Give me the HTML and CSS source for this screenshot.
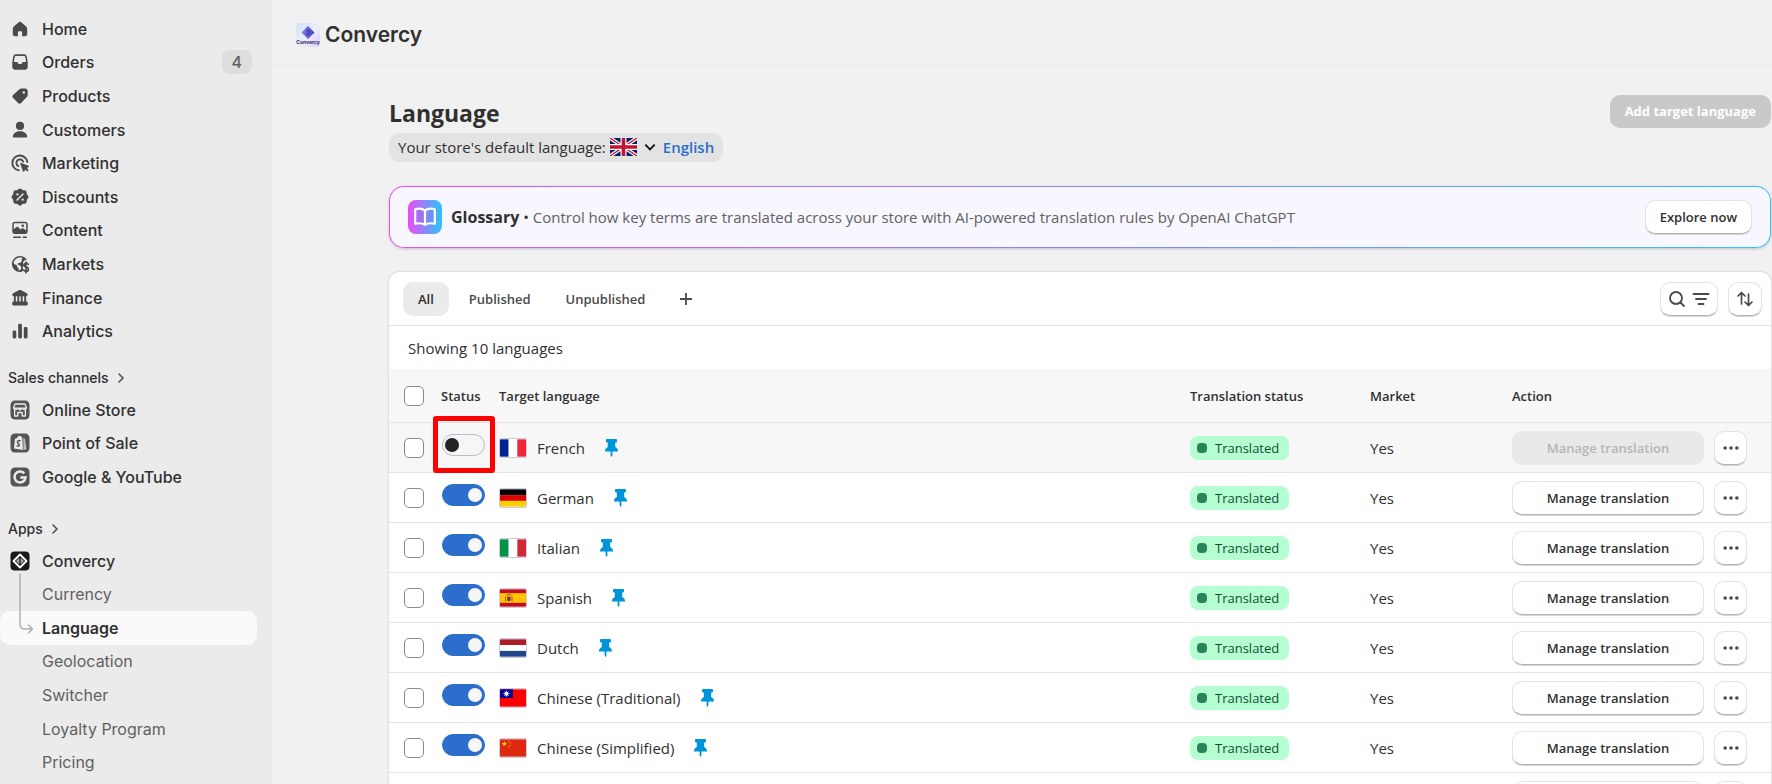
FILE: index.html
```html
<!DOCTYPE html>
<html lang="en">
<head>
    <meta charset="UTF-8">
    <title>Convercy - Language</title>
    <link rel="stylesheet" href="styles.css">
</head>
<body>
    <!-- shared icons -->
    <svg class="sprite" aria-hidden="true">
        <symbol id="pin" viewBox="0 0 13 18">
            <path d="M2 0h9a1 1 0 0 1 1 1v1.500a1 1 0 0 1-1 1h-.8v4.500c1.700.9 2.800 2.200 2.800 4v.5H7.400v4L6.500 18l-.9-1.500v-4H0V12c0-1.800 1.100-3.100 2.800-4V3.500H2a1 1 0 0 1-1-1V1a1 1 0 0 1 1-1z" fill="#0095da"/>
        </symbol>
        <symbol id="dots" viewBox="0 0 20 20">
            <g fill="#4a4a4a"><circle cx="3.500" cy="10" r="2"/><circle cx="10" cy="10" r="2"/><circle cx="16.500" cy="10" r="2"/></g>
        </symbol>
        <symbol id="chevron" viewBox="0 0 12 12">
            <path d="M4 2l4 4-4 4" fill="none" stroke="#4a4a4a" stroke-width="1.500" stroke-linecap="round" stroke-linejoin="round"/>
        </symbol>
    </svg>

    <div class="app">
        <nav class="sidebar">
            <ul class="nav nav-main">
                <li><a href="#"><svg class="icon" viewBox="0 0 20 20"><path d="M9.100 2.900 4 7.300C3.200 8 2.800 8.900 2.800 9.900v5.300a2 2 0 0 0 2 2h3.100v-4a1 1 0 0 1 1-1h2.200a1 1 0 0 1 1 1v4h3.100a2 2 0 0 0 2-2V9.900c0-1-.4-1.900-1.200-2.600l-5.100-4.400a1.400 1.400 0 0 0-1.800 0z"/></svg>Home</a></li>
                <li><a href="#"><svg class="icon" viewBox="0 0 20 20"><path fill-rule="evenodd" d="M5.800 2.300h8.400c1.300 0 2.400 1 2.600 2.300l.9 5.400v4.700a3 3 0 0 1-3 3H5.300a3 3 0 0 1-3-3V10l.9-5.400C3.400 3.300 4.500 2.300 5.800 2.300zM6 3.900c-.7 0-1.200.4-1.300 1.100L3.900 10h2.600c.8 0 1.200.5 1.600 1.200.3.6.8.9 1.900.9s1.600-.3 1.900-.9c.4-.7.8-1.200 1.600-1.200h2.600l-.8-5c-.1-.7-.6-1.100-1.300-1.100z"/></svg>Orders<span class="count">4</span></a></li>
                <li><a href="#"><svg class="icon" viewBox="0 0 20 20"><path fill-rule="evenodd" d="M11.200 2.500h3.800a2.700 2.700 0 0 1 2.700 2.700v3.600c0 .8-.3 1.600-.9 2.200l-5.700 5.900a2.100 2.100 0 0 1-3 0l-5-5a2.100 2.100 0 0 1 0-3l6-5.500c.6-.6 1.300-.9 2.100-.9zM13.800 5.300a1.200 1.200 0 1 0 0 2.400 1.200 1.200 0 0 0 0-2.400z"/></svg>Products</a></li>
                <li><a href="#"><svg class="icon" viewBox="0 0 20 20"><circle cx="10" cy="5.900" r="4.100"/><path d="M2.800 16.200c.5-3 3.400-5 7.200-5s6.700 2 7.200 5c.1.800-.5 1.400-1.300 1.400H4.100c-.8 0-1.400-.6-1.300-1.400z"/></svg>Customers</a></li>
                <li><a href="#"><svg class="icon" viewBox="0 0 20 20"><g fill="none" stroke="#4a4a4a" stroke-width="1.900" stroke-linecap="round"><path d="M8.800 17.400A7.500 7.500 0 1 1 17.300 9"/><path d="M8.300 13A3.500 3.500 0 1 1 13.200 8.700"/></g><path d="M10.300 9.800l8.300 3c.6.200.6 1 .1 1.300l-2 .9 2 2-1.500 1.500-2-2-.9 2c-.3.500-1.100.5-1.300-.1l-3-8.300c-.1-.2.100-.4.300-.3z"/></svg>Marketing</a></li>
                <li><a href="#"><svg class="icon" viewBox="0 0 20 20"><rect x="3.300" y="3.300" width="13.400" height="13.400" rx="2.500"/><rect x="3.300" y="3.300" width="13.400" height="13.400" rx="2.500" transform="rotate(45 10 10)"/><path d="M7 13l6-6" stroke="#ebebeb" stroke-width="1.500" stroke-linecap="round"/><g fill="#ebebeb"><circle cx="7.400" cy="7.400" r="1.100"/><circle cx="12.700" cy="12.700" r="1.100"/></g></svg>Discounts</a></li>
                <li><a href="#"><svg class="icon" viewBox="0 0 20 20"><path fill-rule="evenodd" d="M5 1.800h10a2.700 2.700 0 0 1 2.700 2.700v6.700a2.700 2.700 0 0 1-2.700 2.700H5a2.700 2.700 0 0 1-2.700-2.700V4.500A2.700 2.700 0 0 1 5 1.800zm0 1.500c-.7 0-1.200.5-1.200 1.200v4.800l2.700-2.200c.5-.4 1-.4 1.500 0L10.500 9.500l1.400-1c.5-.4 1-.4 1.500 0l2.800 2V4.500c0-.7-.5-1.200-1.200-1.200zm7.800 1.200a1.300 1.300 0 1 0 0 2.600 1.300 1.300 0 0 0 0-2.600z"/><path d="M3.800 17.200h6.500M13.300 17.200h3" stroke="#4a4a4a" stroke-width="1.600" stroke-linecap="round"/></svg>Content</a></li>
                <li><a href="#"><svg class="icon" viewBox="0 0 20 20"><path fill-rule="evenodd" d="M10 1.900c2.900 0 5.400 1.500 6.900 3.800-1.900-.2-3.200.8-3.700 2.300-.4 1.300 0 2.500.9 3.400-1.300.8-1.700 2.200-1 3.600.3.700.1 1.300-.6 1.900-.8.900-1.600 1.200-2.500 1.200a8.100 8.100 0 1 1 0-16.200zM3.600 8.800c.1 1 1 1.700 2.200 1.900 1 .2 1.300.7 1.300 1.500 0 1 .5 1.500 1.400 1.700l.3 2.600c1.700-.4 2.500-1.600 2.400-3.100-.1-1.500-1.200-2-2.500-2.400-.9-.3-1.200-.8-.8-1.400.4-.7 1.300-.7 2.200-.9 1.400-.4 1.900-1.300 1.600-2.500-.3-1.100.1-1.800 1-2.300-3.700-1.500-8.200.4-9.100 4.900z"/><path d="M18.300 10.300c-.5-.8-1.300-1.100-2.200-1-2.600.2-2.600 3.400 0 3.800 3.100.5 3 4.200 0 4.200-1.100 0-1.900-.4-2.400-1.300M16 8v11" fill="none" stroke="#4a4a4a" stroke-width="1.600" stroke-linecap="round"/></svg>Markets</a></li>
                <li><a href="#"><svg class="icon" viewBox="0 0 20 20"><path d="M9.200 2.100 3.100 5.200c-1.200.6-1 3 .6 3h12.600c1.600 0 1.800-2.400.6-3l-6.100-3.100c-.5-.3-1.100-.3-1.600 0z"/><path d="M4.800 8v6M8.300 8v6M11.700 8v6M15.200 8v6" stroke="#4a4a4a" stroke-width="1.900"/><rect x="2.200" y="13.400" width="15.600" height="4" rx="1.300"/></svg>Finance</a></li>
                <li><a href="#"><svg class="icon" viewBox="0 0 20 20"><rect x="2.600" y="9.500" width="3.700" height="8" rx="1.400"/><rect x="8.200" y="2.800" width="3.700" height="14.700" rx="1.400"/><rect x="13.800" y="6" width="3.700" height="11.500" rx="1.400"/></svg>Analytics</a></li>
            </ul>

            <h2 class="nav-title"><a href="#">Sales channels <svg class="chevron"><use href="#chevron"/></svg></a></h2>
            <ul class="nav nav-channels">
                <li><a href="#"><svg class="icon" viewBox="0 0 20 20"><rect x=".5" y=".5" width="19" height="19" rx="4.500" fill="#555"/><path d="M5 4h10l1.500 4.200H3.500zM4.600 9v7h3.200v-3.500h4.400V16h3.200V9" fill="none" stroke="#ebebeb" stroke-width="1.300" stroke-linejoin="round"/><path d="M3.500 8.200a2 2 0 0 0 4.300 0 2.200 2.200 0 0 0 4.400 0 2 2 0 0 0 4.300 0z" fill="#ebebeb"/></svg>Online Store</a></li>
                <li><a href="#"><svg class="icon" viewBox="0 0 20 20"><rect x=".5" y=".5" width="19" height="19" rx="4.500" fill="#555"/><path d="M5 5.700l2.300-.7C7.700 3.500 8.700 2.700 9.800 2.800c.8.100 1.300.8 1.500 1.500l.9-.2.700 12.900-9-1.500z" fill="#ebebeb"/><path d="M13.200 5l1.700.6 1.500 10.600-2.900.8z" fill="#bbb"/><path d="M10.600 8c-1.700-.9-3.300-.2-3.200 1.300.1 1.300 2.100 1.500 1.900 2.900-.1 1.200-1.700 1.200-2.800.3" fill="none" stroke="#555" stroke-width="1.500"/></svg>Point of Sale</a></li>
                <li><a href="#"><svg class="icon" viewBox="0 0 20 20"><rect x=".5" y=".5" width="19" height="19" rx="4.500" fill="#555"/><path d="M14.200 6.400A5.500 5.500 0 1 0 15.500 10.600H10.300" fill="none" stroke="#ebebeb" stroke-width="2.500"/></svg>Google &amp; YouTube</a></li>
            </ul>

            <h2 class="nav-title"><a href="#">Apps <svg class="chevron"><use href="#chevron"/></svg></a></h2>
            <ul class="nav nav-apps">
                <li><a href="#"><svg class="icon" viewBox="0 0 20 20"><rect x=".5" y=".5" width="19" height="19" rx="4" fill="#1a1a1a"/><path d="M10 3.500l6.500 6.500-6.500 6.500L3.500 10z" fill="none" stroke="#fff" stroke-width="1.800" stroke-linejoin="round"/><path d="M9.300 6.800v6.500L6 10zM10.700 6.800v6.500L14 10z" fill="#aaa"/></svg>Convercy</a></li>
                <li class="sub"><a href="#">Currency</a></li>
                <li class="sub active"><a href="#">Language</a>
                    <svg class="branch" viewBox="0 0 16 64"><path d="M2 1v50q0 5 5 5h7M10.500 52l4 4-4 4" fill="none" stroke="#b0b0b0" stroke-width="1.500" stroke-linecap="round" stroke-linejoin="round"/></svg>
                </li>
                <li class="sub"><a href="#">Geolocation</a></li>
                <li class="sub"><a href="#">Switcher</a></li>
                <li class="sub"><a href="#">Loyalty Program</a></li>
                <li class="sub"><a href="#">Pricing</a></li>
            </ul>
        </nav>

        <main class="main">
            <header class="app-bar">
                <svg class="app-logo" viewBox="0 0 24 24">
                    <defs>
                        <linearGradient id="logo-bg" x1="0" y1="0" x2="1" y2="1"><stop offset="0" stop-color="#c9e0fb"/><stop offset=".5" stop-color="#f0effa"/><stop offset="1" stop-color="#dccbfa"/></linearGradient>
                        <linearGradient id="logo-fg" x1="0" y1="0" x2="1" y2="0"><stop offset="0" stop-color="#8a7bf0"/><stop offset="1" stop-color="#3a48c8"/></linearGradient>
                    </defs>
                    <rect width="24" height="24" rx="4" fill="url(#logo-bg)"/>
                    <path d="M12 3l6.500 6.500L12 16 5.500 9.500z" fill="url(#logo-fg)"/>
                    <path d="M13.800 7.800c-2-1.200-3.500.8-1.800 1.700s.2 2.900-1.800 1.700" fill="none" stroke="#2a2a60"/>
                    <text x="12" y="21" text-anchor="middle" class="logo-text">Convercy</text>
                </svg>
                <span class="app-name">Convercy</span>
            </header>

            <div class="page">
                <div class="page-head">
                    <div>
                        <h1>Language</h1>
                        <div class="default-language">
                            <span>Your store's default language:</span>
                            <button class="flag-picker" aria-label="Change default language">
                                <svg class="uk" viewBox="0 0 27 18"><rect width="27" height="18" fill="#012169"/><path d="M0 0l27 18M27 0L0 18" stroke="#fff" stroke-width="3.600"/><path d="M0 0l27 18M27 0L0 18" stroke="#c8102e" stroke-width="1.300"/><path d="M13.500 0v18M0 9h27" stroke="#fff" stroke-width="6"/><path d="M13.500 0v18M0 9h27" stroke="#c8102e" stroke-width="3.600"/></svg>
                                <svg class="caret" viewBox="0 0 12 12"><path d="M2 4l4 4 4-4" fill="none" stroke="#111" stroke-width="1.600"/></svg>
                            </button>
                            <a href="#">English</a>
                        </div>
                    </div>
                    <button class="btn-primary" disabled>Add target language</button>
                </div>

                <section class="banner">
                    <span class="banner-icon">
                        <svg viewBox="0 0 24 24"><path d="M12 5.500C9.500 3.600 5.500 3.300 2.200 4.200v14.600c3.300-.8 7.300-.6 9.800 1 2.500-1.600 6.500-1.800 9.800-1V4.200C18.500 3.300 14.500 3.600 12 5.500zM12 5.500v14" fill="rgba(120,80,220,.15)" stroke="#fff" stroke-width="2.200" stroke-linejoin="round"/></svg>
                    </span>
                    <p><strong>Glossary</strong> • <span>Control how key terms are translated across your store with AI-powered translation rules by OpenAI ChatGPT</span></p>
                    <button class="btn">Explore now</button>
                </section>

                <section class="card">
                    <div class="tabs">
                        <button class="tab selected">All</button>
                        <button class="tab">Published</button>
                        <button class="tab">Unpublished</button>
                        <button class="tab-add" aria-label="Add view"><svg viewBox="0 0 14 14"><path d="M7 1v12M1 7h12" stroke="#4a4a4a" stroke-width="1.800"/></svg></button>
                        <div class="tools">
                            <button class="btn" aria-label="Search and filter">
                                <svg viewBox="0 0 18 18"><g fill="none" stroke="#4a4a4a" stroke-width="1.800" stroke-linecap="round"><circle cx="8" cy="8" r="6"/><path d="M12.500 12.500L16 16"/></g></svg>
                                <svg viewBox="0 0 18 18"><path d="M1.500 4h15M4 9h10M6.500 14h5" stroke="#4a4a4a" stroke-width="1.800" stroke-linecap="round"/></svg>
                            </button>
                            <button class="btn" aria-label="Sort">
                                <svg viewBox="0 0 18 18"><path d="M5.500 14V2.500M2 6l3.500-3.500L9 6M12.500 4v11.500M9 12l3.500 3.500L16 12" fill="none" stroke="#4a4a4a" stroke-width="1.700" stroke-linecap="round" stroke-linejoin="round"/></svg>
                            </button>
                        </div>
                    </div>
                    <p class="showing">Showing 10 languages</p>

                    <table class="languages">
                        <thead>
                            <tr>
                                <th class="col-check"><input type="checkbox" class="check" aria-label="Select all"></th>
                                <th class="col-status">Status</th>
                                <th>Target language</th>
                                <th class="col-translation">Translation status</th>
                                <th class="col-market">Market</th>
                                <th class="col-action">Action</th>
                            </tr>
                        </thead>
                        <tbody>
                            <tr class="hovered">
                                <td><input type="checkbox" class="check" aria-label="Select French"></td>
                                <td class="highlighted"><input type="checkbox" class="toggle" aria-label="Publish French"></td>
                                <td><div class="lang"><svg class="flag" viewBox="0 0 27 18"><rect width="9" height="18" fill="#002395"/><rect x="9" width="9" height="18" fill="#fff"/><rect x="18" width="9" height="18" fill="#ed2939"/></svg><span>French</span><svg class="pin"><use href="#pin"/></svg></div></td>
                                <td><span class="badge">Translated</span></td>
                                <td>Yes</td>
                                <td><div class="actions"><button class="btn" disabled>Manage translation</button><button class="btn more" aria-label="More"><svg><use href="#dots"/></svg></button></div></td>
                            </tr>
                            <tr>
                                <td><input type="checkbox" class="check" aria-label="Select German"></td>
                                <td><input type="checkbox" class="toggle" aria-label="Publish German" checked></td>
                                <td><div class="lang"><svg class="flag" viewBox="0 0 27 18"><rect width="27" height="6"/><rect y="6" width="27" height="6" fill="#d00"/><rect y="12" width="27" height="6" fill="#ffce00"/></svg><span>German</span><svg class="pin"><use href="#pin"/></svg></div></td>
                                <td><span class="badge">Translated</span></td>
                                <td>Yes</td>
                                <td><div class="actions"><button class="btn">Manage translation</button><button class="btn more" aria-label="More"><svg><use href="#dots"/></svg></button></div></td>
                            </tr>
                            <tr>
                                <td><input type="checkbox" class="check" aria-label="Select Italian"></td>
                                <td><input type="checkbox" class="toggle" aria-label="Publish Italian" checked></td>
                                <td><div class="lang"><svg class="flag" viewBox="0 0 27 18"><rect width="9" height="18" fill="#009246"/><rect x="9" width="9" height="18" fill="#fff"/><rect x="18" width="9" height="18" fill="#ce2b37"/></svg><span>Italian</span><svg class="pin"><use href="#pin"/></svg></div></td>
                                <td><span class="badge">Translated</span></td>
                                <td>Yes</td>
                                <td><div class="actions"><button class="btn">Manage translation</button><button class="btn more" aria-label="More"><svg><use href="#dots"/></svg></button></div></td>
                            </tr>
                            <tr>
                                <td><input type="checkbox" class="check" aria-label="Select Spanish"></td>
                                <td><input type="checkbox" class="toggle" aria-label="Publish Spanish" checked></td>
                                <td><div class="lang"><svg class="flag" viewBox="0 0 27 18"><rect width="27" height="18" fill="#c60b1e"/><rect y="4" width="27" height="10" fill="#ffc400"/><path d="M6.500 6.500c1.500-1.500 4-1.500 5.500 0M5.800 7.500v5M12.500 7.500v5" fill="none" stroke="#8a5a20"/><rect x="7.500" y="7.500" width="3.500" height="4.500" rx="1" fill="#7a3040"/></svg><span>Spanish</span><svg class="pin"><use href="#pin"/></svg></div></td>
                                <td><span class="badge">Translated</span></td>
                                <td>Yes</td>
                                <td><div class="actions"><button class="btn">Manage translation</button><button class="btn more" aria-label="More"><svg><use href="#dots"/></svg></button></div></td>
                            </tr>
                            <tr>
                                <td><input type="checkbox" class="check" aria-label="Select Dutch"></td>
                                <td><input type="checkbox" class="toggle" aria-label="Publish Dutch" checked></td>
                                <td><div class="lang"><svg class="flag" viewBox="0 0 27 18"><rect width="27" height="6" fill="#ae1c28"/><rect y="6" width="27" height="6" fill="#fff"/><rect y="12" width="27" height="6" fill="#21468b"/></svg><span>Dutch</span><svg class="pin"><use href="#pin"/></svg></div></td>
                                <td><span class="badge">Translated</span></td>
                                <td>Yes</td>
                                <td><div class="actions"><button class="btn">Manage translation</button><button class="btn more" aria-label="More"><svg><use href="#dots"/></svg></button></div></td>
                            </tr>
                            <tr>
                                <td><input type="checkbox" class="check" aria-label="Select Chinese (Traditional)"></td>
                                <td><input type="checkbox" class="toggle" aria-label="Publish Chinese (Traditional)" checked></td>
                                <td><div class="lang"><svg class="flag" viewBox="0 0 27 18"><rect width="27" height="18" fill="#fe0000"/><rect width="13.500" height="9" fill="#000095"/><circle cx="6.700" cy="4.500" r="2" fill="#fff"/><path d="M6.700 1.300v6.400M3.500 4.500h6.400M4.500 2.300l4.400 4.400M8.900 2.300L4.500 6.700" stroke="#fff" stroke-width=".8"/></svg><span>Chinese (Traditional)</span><svg class="pin"><use href="#pin"/></svg></div></td>
                                <td><span class="badge">Translated</span></td>
                                <td>Yes</td>
                                <td><div class="actions"><button class="btn">Manage translation</button><button class="btn more" aria-label="More"><svg><use href="#dots"/></svg></button></div></td>
                            </tr>
                            <tr>
                                <td><input type="checkbox" class="check" aria-label="Select Chinese (Simplified)"></td>
                                <td><input type="checkbox" class="toggle" aria-label="Publish Chinese (Simplified)" checked></td>
                                <td><div class="lang"><svg class="flag" viewBox="0 0 27 18"><rect width="27" height="18" fill="#de2910"/><g fill="#ffde00"><path d="M4.500 1.700l.7 2h2.100L5.600 5l.6 2-1.700-1.200L2.800 7l.6-2-1.700-1.300h2.100z"/><circle cx="9" cy="2" r=".6"/><circle cx="10.800" cy="3.800" r=".6"/><circle cx="10.800" cy="6.200" r=".6"/><circle cx="9" cy="8" r=".6"/></g></svg><span>Chinese (Simplified)</span><svg class="pin"><use href="#pin"/></svg></div></td>
                                <td><span class="badge">Translated</span></td>
                                <td>Yes</td>
                                <td><div class="actions"><button class="btn">Manage translation</button><button class="btn more" aria-label="More"><svg><use href="#dots"/></svg></button></div></td>
                            </tr>
                            <tr>
                                <td colspan="5"></td>
                                <td><div class="actions"><button class="btn" aria-label="Manage translation"></button><button class="btn more" aria-label="More"></button></div></td>
                            </tr>
                        </tbody>
                    </table>
                </section>
            </div>
        </main>
    </div>
</body>
</html>
```
FILE: styles.css
```css
*, *::before, *::after {
    box-sizing: border-box;
}
body {
    margin: 0;
    font-family: "Open Sans", "Noto Sans", sans-serif;
    font-size: 15px;
    line-height: 24px;
    color: #303030;
    background-color: #f1f1f1;
}
h1, h2, p, ul {
    margin: 0;
    padding: 0;
}
a {
    color: inherit;
    text-decoration: none;
}
button {
    font: inherit;
    color: inherit;
    border: 0;
    padding: 0;
    background: none;
}
svg {
    display: block;
    flex-shrink: 0;
}
.sprite {
    display: none;
}
.app {
    display: flex;
    height: 100vh;
    overflow: hidden;
}

/* sidebar */
.sidebar {
    flex: 0 0 272px;
    padding-top: 12px;
    background-color: #ebebeb;
    font-family: Inter, sans-serif;
    font-size: 16px;
    font-weight: 500;
}
.nav {
    list-style: none;
    display: grid;
    grid-auto-rows: 1fr;
    margin-right: 15px;
}
.nav-main {
    min-height: 336px;
}
.nav-channels {
    min-height: 101px;
}
.nav-apps {
    min-height: 235px;
}
.nav li {
    display: flex;
    position: relative;
}
.nav a {
    flex: 1;
    display: flex;
    align-items: center;
    gap: 12px;
    padding-left: 10px;
}
.nav .sub a {
    padding-left: 42px;
    font-weight: 400;
    color: #616161;
}
.nav .active a {
    background-color: #fafafa;
    border-radius: 10px;
    font-weight: 600;
    color: #303030;
}
.branch {
    position: absolute;
    left: 18px;
    bottom: 8px;
    width: 16px;
    height: 64px;
}
.icon {
    width: 20px;
    height: 20px;
    fill: #4a4a4a;
}
.count {
    margin-left: auto;
    margin-right: 5px;
    padding: 0 10px;
    border-radius: 8px;
    background-color: #dedede;
    color: #616161;
}
.nav-title {
    margin-top: 14px;
    padding: 4px 8px 3px;
    font-size: 14px;
    font-weight: 500;
}
.nav-channels + .nav-title {
    margin-top: 19px;
}
.nav-title a {
    display: flex;
    align-items: center;
    gap: 6px;
}
.chevron {
    width: 12px;
    height: 12px;
}

/* top bar */
.main {
    flex: 1;
    min-width: 0;
}
.app-bar {
    display: flex;
    align-items: center;
    gap: 5px;
    height: 66px;
    padding: 4px 24px 0;
    border-bottom: 1px solid #e8e8e8;
    font-family: Inter, sans-serif;
}
.app-logo {
    width: 24px;
    height: 24px;
}
.logo-text {
    font-size: 5px;
    font-weight: 700;
    fill: #2a2a60;
}
.app-name {
    font-size: 21px;
    font-weight: 600;
}

/* page */
.page {
    padding: 31px 1px 0 117px;
}
.page-head {
    display: flex;
    justify-content: space-between;
    align-items: flex-start;
}
h1 {
    font-size: 23px;
    font-weight: 700;
    line-height: 32px;
}
.default-language {
    display: flex;
    align-items: center;
    gap: 4px;
    margin-top: 4px;
    padding: 2px 9px 3px;
    border-radius: 10px;
    background-color: #e3e3e3;
}
.default-language a {
    margin-left: 2px;
    font-weight: 600;
    color: #2c6ecb;
}
.flag-picker {
    display: flex;
    align-items: center;
    gap: 6px;
}
.uk {
    width: 27px;
    height: 18px;
}
.caret {
    width: 14px;
    height: 14px;
}
.btn-primary {
    padding: 0 15px;
    border-radius: 10px;
    background-color: #c9c9c9;
    color: #fff;
    font-size: 13px;
    font-weight: 700;
    line-height: 33px;
    margin-top: -2px;
}
.btn {
    display: flex;
    align-items: center;
    justify-content: center;
    gap: 8px;
    height: 34px;
    padding: 0 14px;
    border: 1px solid #e3e3e3;
    border-bottom-color: #b5b5b5;
    border-radius: 10px;
    background-color: #fff;
    box-shadow: 0 1px 0 #d4d4d4;
    font-size: 13px;
    font-weight: 600;
    white-space: nowrap;
}
.btn:disabled {
    border-color: #e9e9e9;
    background-color: #e9e9e9;
    box-shadow: none;
    color: #b5b5b5;
}
.banner {
    display: flex;
    align-items: center;
    gap: 9px;
    margin-top: 24px;
    padding: 13px 18px;
    border: 1px solid transparent;
    border-radius: 15px;
    background: linear-gradient(#f8f7ff, #f8f7ff) padding-box, linear-gradient(90deg, #ec4ef5, #2cc4fc) border-box;
    box-shadow: 0 1px 3px rgba(0, 0, 0, 0.2);
}
.banner-icon {
    padding: 5px;
    border-radius: 8px;
    background: linear-gradient(90deg, #e94df5, #2cc4fc);
}
.banner-icon svg {
    width: 24px;
    height: 24px;
}
.banner p {
    flex: 1;
}
.banner p span {
    color: #616161;
}
.banner strong {
    font-size: 16px;
}

/* language list */
.card {
    margin-top: 24px;
    border-radius: 10px 10px 0 0;
    background-color: #fff;
    box-shadow: 0 0 2px rgba(0, 0, 0, 0.25);
}
.tabs {
    display: flex;
    align-items: center;
    gap: 5px;
    padding: 10px 9px 9px 14px;
    border-bottom: 1px solid #e3e3e3;
}
.tab {
    padding: 0 15px;
    border-radius: 10px;
    font-size: 13px;
    font-weight: 600;
    line-height: 34px;
    color: #4a4a4a;
}
.tab.selected {
    background-color: #ebebeb;
    color: #303030;
}
.tab-add {
    padding: 10px 14px;
}
.tab-add svg {
    width: 14px;
    height: 14px;
}
.tools {
    display: flex;
    gap: 10px;
    margin-left: auto;
}
.tools .btn {
    padding: 0 7px;
    gap: 6px;
}
.tools svg {
    width: 18px;
    height: 18px;
}
.showing {
    padding: 10px 19px 9px;
}
.languages {
    width: 100%;
    table-layout: fixed;
    border-spacing: 0;
}
.languages th {
    height: 54px;
    padding: 0;
    background-color: #f7f7f7;
    border-bottom: 1px solid #e3e3e3;
    font-size: 13px;
    font-weight: 600;
    text-align: left;
}
.languages td {
    height: 50px;
    padding: 0;
    border-bottom: 1px solid #e3e3e3;
}
.languages .hovered td {
    background-color: #f7f7f7;
}
.col-check {
    width: 52px;
}
.col-status {
    width: 58px;
}
.col-translation {
    width: 180px;
}
.col-market {
    width: 142px;
}
.col-action {
    width: 259px;
}
.check {
    display: block;
    appearance: none;
    width: 20px;
    height: 20px;
    margin: 0 0 0 15px;
    border: 1px solid #8a8a8a;
    border-radius: 5px;
    background-color: #fff;
}
.toggle {
    display: flex;
    align-items: center;
    appearance: none;
    width: 43px;
    height: 22px;
    margin: 0 0 6px 1px;
    padding: 0 2px;
    border: 1px solid #babfc3;
    border-radius: 11px;
    background-color: #f6f6f7;
}
.toggle::before {
    content: "";
    width: 14px;
    height: 14px;
    border-radius: 50%;
    background-color: #202223;
}
.toggle:checked {
    justify-content: flex-end;
    border-color: #2c6ecb;
    background-color: #2c6ecb;
}
.toggle:checked::before {
    background-color: #f6f6f7;
}
.highlighted {
    position: relative;
}
.highlighted::after {
    content: "";
    position: absolute;
    top: -7px;
    left: -8px;
    width: 62px;
    height: 57px;
    border: 5px solid #f00;
    border-radius: 3px;
}
.lang {
    display: flex;
    align-items: center;
}
.flag {
    width: 28px;
    height: 20px;
    border: 1px solid #ccd;
    border-radius: 2px;
}
.lang span {
    margin: 0 20px 0 10px;
}
.pin {
    width: 13px;
    height: 18px;
}
.badge {
    display: inline-flex;
    align-items: center;
    gap: 8px;
    padding: 0 10px 0 7px;
    border-radius: 8px;
    background-color: #b4fed2;
    color: #0c5132;
    font-size: 13px;
}
.badge::before {
    content: "";
    width: 10px;
    height: 10px;
    border-radius: 4px;
    background-color: #29845a;
}
.actions {
    display: flex;
    gap: 10px;
}
.actions .btn {
    width: 192px;
}
.actions .more {
    width: 33px;
    padding: 0;
}
.more svg {
    width: 18px;
    height: 18px;
}
```
